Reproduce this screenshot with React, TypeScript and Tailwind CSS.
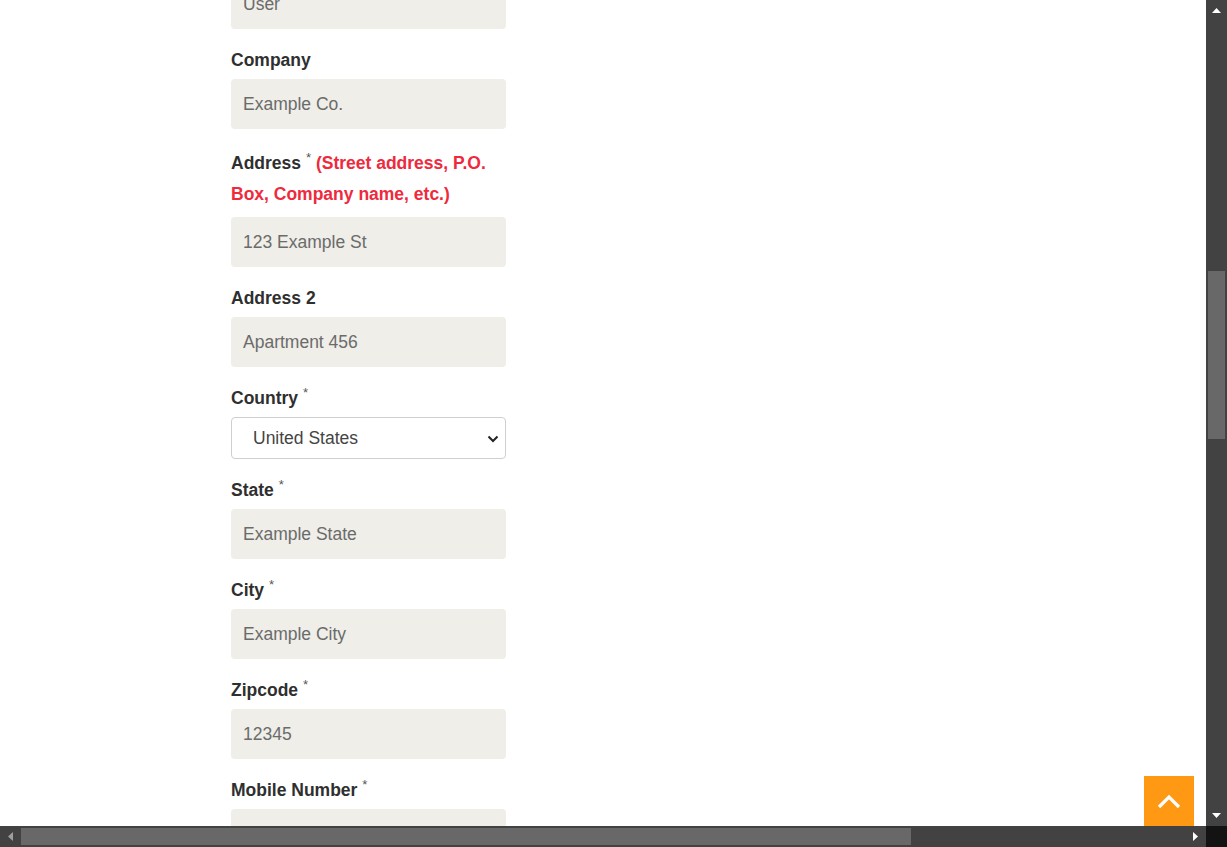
import React from 'react';

const Star = () => <sup className="font-normal text-[#555]">*</sup>;

const inputCls =
  'block w-full h-[50px] px-[12px] rounded-[4px] bg-[#efeee8] text-[#333] placeholder:text-[#6b6b6b] outline-none';

const Field = ({ label, req, placeholder }: { label: string; req?: boolean; placeholder: string }) => (
  <div className="mt-[16px]">
    <label className="block font-bold leading-[31px] mb-[3px] text-[#2f2f2f]">
      {label} {req && <Star />}
    </label>
    <input className={inputCls} placeholder={placeholder} />
  </div>
);

const Tri = ({ dir, color }: { dir: 'up' | 'down' | 'left' | 'right'; color: string }) => {
  const pts = {
    up: '0,5 4.5,0 9,5',
    down: '0,0 9,0 4.5,5',
    left: '5,0 5,9 0,4.5',
    right: '0,0 0,9 5,4.5',
  }[dir];
  const vert = dir === 'up' || dir === 'down';
  return (
    <svg width={vert ? 9 : 5} height={vert ? 5 : 9} viewBox={vert ? '0 0 9 5' : '0 0 5 9'}>
      <polygon points={pts} fill={color} />
    </svg>
  );
};

export default function App() {
  return (
    <div className="w-[1227px] h-[847px] flex flex-col overflow-hidden bg-white font-['Liberation_Sans',Arial,sans-serif] text-[17.5px]">
      <div className="flex flex-1 min-h-0">
        <div className="relative flex-1 overflow-hidden">
          <div className="-mt-[21px] ml-[231px] w-[275px]">
            <input className={inputCls} placeholder="User" />
            <Field label="Company" placeholder="Example Co." />

            <div className="mt-[19px]">
              <label className="block font-bold leading-[31px] mb-[7px] text-[#2f2f2f]">
                Address <Star />{' '}
                <span className="text-[#ee2a3c]">(Street address, P.O. Box, Company name, etc.)</span>
              </label>
              <input className={inputCls} placeholder="123 Example St" />
            </div>

            <Field label="Address 2" placeholder="Apartment 456" />

            <div className="mt-[16px]">
              <label className="block font-bold leading-[31px] mb-[3px] text-[#2f2f2f]">
                Country <Star />
              </label>
              <div className="relative">
                <select className="block w-full h-[42px] pl-[21px] pr-[30px] rounded-[4px] bg-white border border-[#cfcfcf] text-[#444] appearance-none outline-none">
                  <option>United States</option>
                  <option>Canada</option>
                </select>
                <svg
                  className="absolute right-[7px] top-[18px] pointer-events-none"
                  width="12"
                  height="8"
                  viewBox="0 0 12 8"
                >
                  <polyline points="1.5,1.5 6,6 10.5,1.5" fill="none" stroke="#222" strokeWidth="2" />
                </svg>
              </div>
            </div>

            <Field label="State" req placeholder="Example State" />
            <Field label="City" req placeholder="Example City" />
            <Field label="Zipcode" req placeholder="12345" />
            <Field label="Mobile Number" req placeholder="" />
          </div>

          <button className="absolute right-[12px] bottom-0 w-[50px] h-[50px] bg-[#ff9914] flex items-center justify-center">
            <svg width="24" height="15" viewBox="0 0 24 15">
              <polyline points="2,13 12,3 22,13" fill="none" stroke="#fff" strokeWidth="3.2" />
            </svg>
          </button>
        </div>

        {/* vertical scrollbar */}
        <div className="w-[21px] bg-[#424242] flex flex-col">
          <div className="h-[21px] flex items-center justify-center">
            <Tri dir="up" color="#fff" />
          </div>
          <div className="flex-1 px-[2px]">
            <div className="mt-[250px] h-[168px] bg-[#686868]" />
          </div>
          <div className="h-[21px] flex items-center justify-center">
            <Tri dir="down" color="#fff" />
          </div>
        </div>
      </div>

      {/* horizontal scrollbar */}
      <div className="h-[21px] flex">
        <div className="flex-1 bg-[#424242] flex items-center">
          <div className="w-[21px] flex items-center justify-center">
            <Tri dir="left" color="#9e9e9e" />
          </div>
          <div className="w-[890px] h-[17px] bg-[#686868]" />
          <div className="flex-1" />
          <div className="w-[21px] flex items-center justify-center">
            <Tri dir="right" color="#fff" />
          </div>
        </div>
        <div className="w-[21px] bg-[#131313]" />
      </div>
    </div>
  );
}
